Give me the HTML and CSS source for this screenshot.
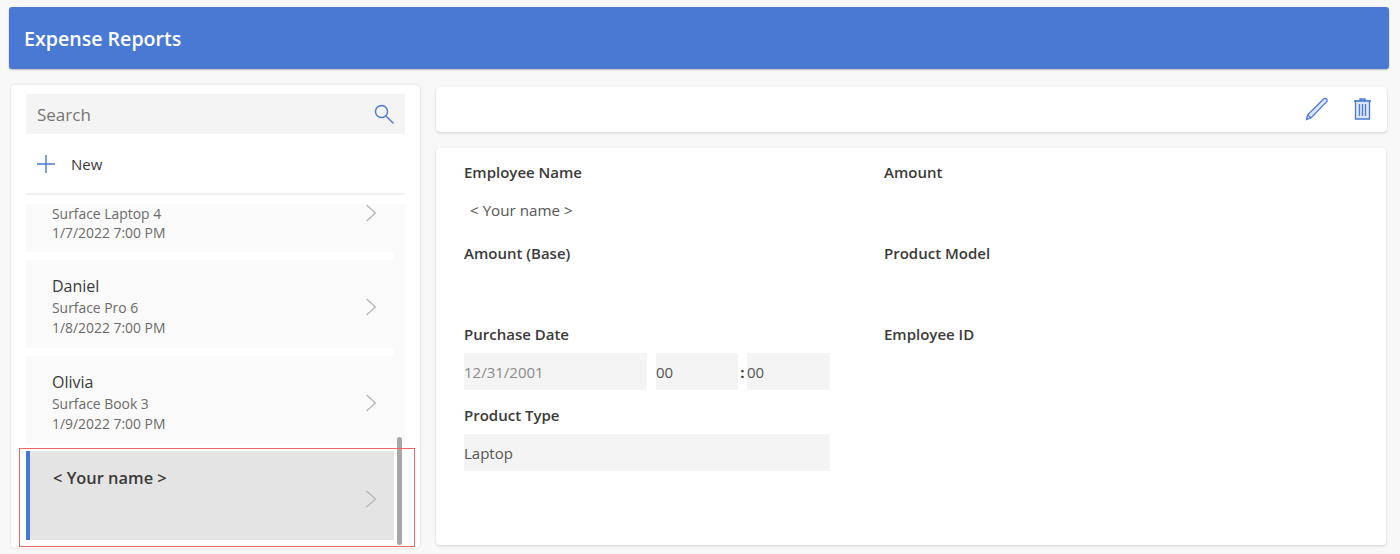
FILE: index.html
```html
<!DOCTYPE html>
<html lang="en">
<head>
    <meta charset="UTF-8">
    <title>Expense Reports</title>
    <link rel="stylesheet" href="styles.css">
</head>
<body>
    <header class="app-header">Expense Reports</header>
    <div class="app-body">
        <aside class="side-panel">
            <div class="search-box">
                <span class="search-text">Search</span>
                <svg class="search-icon" width="22" height="22" viewBox="0 0 22 22"><circle cx="8.5" cy="8.5" r="6"/><path d="M13 13l7.5 7.5"/></svg>
            </div>
            <div class="new-row">
                <svg class="plus-icon" width="20" height="20" viewBox="0 0 20 20"><path d="M10 1v18M1 10h18"/></svg>
                <span>New</span>
            </div>
            <div class="list-scroll">
                <div class="list-item partial">
                    <div class="item-sub">Surface Laptop 4</div>
                    <div class="item-sub">1/7/2022 7:00 PM</div>
                    <svg class="chevron" width="12" height="18" viewBox="0 0 12 18"><path d="M1.5 1l9 8-9 8"/></svg>
                </div>
                <div class="list-item">
                    <div class="item-title">Daniel</div>
                    <div class="item-sub">Surface Pro 6</div>
                    <div class="item-sub">1/8/2022 7:00 PM</div>
                    <svg class="chevron" width="12" height="18" viewBox="0 0 12 18"><path d="M1.5 1l9 8-9 8"/></svg>
                </div>
                <div class="list-item">
                    <div class="item-title">Olivia</div>
                    <div class="item-sub">Surface Book 3</div>
                    <div class="item-sub">1/9/2022 7:00 PM</div>
                    <svg class="chevron" width="12" height="18" viewBox="0 0 12 18"><path d="M1.5 1l9 8-9 8"/></svg>
                </div>
            </div>
            <div class="list-item selected">
                <div class="item-title">&lt; Your name &gt;</div>
                <svg class="chevron" width="12" height="18" viewBox="0 0 12 18"><path d="M1.5 1l9 8-9 8"/></svg>
            </div>
            <div class="scroll-thumb"></div>
            <div class="callout"></div>
        </aside>
        <main class="detail">
            <div class="toolbar">
                <svg class="tool-icon" width="26" height="26" viewBox="0 0 26 26"><path d="M2.5 23.5l1.2-4.6L19.6 3a2 2 0 0 1 2.9 0 2 2 0 0 1 0 2.9L6.9 22z"/><path d="M3.7 18.9l3.2 3.1"/></svg>
                <svg class="tool-icon" width="20" height="24" viewBox="0 0 20 24"><path d="M2 4h17M8 4V2h5v2"/><path d="M3.5 4v18h14V4z"/><path d="M7.5 7v12M10.5 7v12M13.5 7v12"/></svg>
            </div>
            <form class="form-card">
                <div class="field">
                    <div class="field-label">Employee Name</div>
                    <div class="field-value">&lt; Your name &gt;</div>
                </div>
                <div class="field">
                    <div class="field-label">Amount</div>
                </div>
                <div class="field">
                    <div class="field-label">Amount (Base)</div>
                </div>
                <div class="field">
                    <div class="field-label">Product Model</div>
                </div>
                <div class="field">
                    <div class="field-label">Purchase Date</div>
                    <div class="date-row">
                        <div class="input-box date-input">12/31/2001</div>
                        <div class="input-box time-input">00</div>
                        <span class="time-colon">:</span>
                        <div class="input-box time-input">00</div>
                    </div>
                </div>
                <div class="field">
                    <div class="field-label">Employee ID</div>
                </div>
                <div class="field">
                    <div class="field-label">Product Type</div>
                    <div class="input-box type-input">Laptop</div>
                </div>
            </form>
        </main>
    </div>
</body>
</html>
```

FILE: styles.css
```css
/* Page */
body {
    margin: 0;
    height: 554px;
    overflow: hidden;
    padding: 7px 11px 0 9px;
    box-sizing: border-box;
    background-color: #f8f8f8;
    font-family: 'Open Sans', 'Noto Sans', sans-serif;
    color: #3b3a39;
}

/* Header */
.app-header {
    height: 62px;
    padding: 1px 0 0 15px;
    box-sizing: border-box;
    display: flex;
    align-items: center;
    background-color: #4a79d4;
    border-radius: 3px;
    box-shadow: 0 1px 2px rgba(0, 0, 0, 0.25);
    color: #fff;
    font-size: 19.6px;
    font-weight: 600;
}

.app-body {
    display: flex;
    gap: 16px;
    margin-top: 16px;
    margin-left: 2px;
}

/* Left panel */
.side-panel {
    position: relative;
    width: 409px;
    height: 463px;
    padding: 9px 15px 0;
    box-sizing: border-box;
    background: #fff;
    border-radius: 4px;
    box-shadow: 0 0 3px rgba(0, 0, 0, 0.14);
}

.search-box {
    height: 40px;
    padding: 1px 10px 0 11px;
    box-sizing: border-box;
    display: flex;
    align-items: center;
    justify-content: space-between;
    background-color: #f4f4f4;
}

.search-text {
    font-size: 17px;
    color: #757575;
}

.search-icon {
    margin-top: -1px;
    fill: none;
    stroke: #4a79d4;
    stroke-width: 1.4;
}

.new-row {
    height: 59px;
    padding-left: 10px;
    display: flex;
    align-items: center;
    gap: 15px;
    border-bottom: 2px solid #f0f0f0;
    font-size: 15px;
}

.plus-icon {
    fill: none;
    stroke: #4a79d4;
    stroke-width: 1.4;
}

/* List */
.list-scroll {
    height: 240px;
    margin-top: 9px;
    margin-bottom: 7px;
    display: flex;
    flex-direction: column;
    justify-content: flex-end;
    overflow: hidden;
    background-color: #fafafa;
}

.list-item {
    position: relative;
    flex: none;
    width: 368px;
    height: 88px;
    padding: 15px 0 0 26px;
    box-sizing: border-box;
    background-color: #fafafa;
}

.list-item + .list-item {
    margin-top: 8px;
    box-shadow: 0 -8px 0 #fff;
}

/* Row that is scrolled half out of the list */
.list-item.partial {
    height: 48px;
    padding-top: 0;
}

.list-item.partial .item-sub {
    line-height: 19px;
}

.list-item.partial .chevron {
    top: 0;
}

.item-title {
    font-size: 16px;
    line-height: 22px;
    margin-bottom: 1px;
}

.item-sub {
    font-size: 13.9px;
    line-height: 20px;
    color: #6b6a69;
}

.chevron {
    position: absolute;
    right: 17px;
    top: 38px;
    fill: none;
    stroke: #b3b3b3;
    stroke-width: 1.2;
}

.list-item.selected {
    height: 89px;
    background-color: #e4e4e4;
    border-left: 4px solid #4a79d4;
    padding-left: 23px;
    padding-top: 16px;
}

.list-item.selected .chevron {
    top: 39px;
}

.list-item.selected .item-title {
    font-weight: 600;
    font-size: 16.4px;
}

.scroll-thumb {
    position: absolute;
    right: 18px;
    top: 352px;
    width: 5px;
    height: 108px;
    border-radius: 3px;
    background-color: #a6a6a6;
}

/* Red marker round the new record */
.callout {
    position: absolute;
    left: 8px;
    top: 363px;
    width: 394px;
    height: 97px;
    border: 1px solid #f46464;
}

/* Right side */
.detail {
    flex: none;
    width: 951px;
    display: flex;
    flex-direction: column;
    gap: 16px;
}

.toolbar {
    height: 45px;
    margin-top: 2px;
    padding: 0 15px 1px 0;
    box-sizing: border-box;
    display: flex;
    align-items: center;
    justify-content: flex-end;
    gap: 22px;
    background: #fff;
    border-radius: 4px;
    box-shadow: 0 1px 3px rgba(0, 0, 0, 0.16);
}

.tool-icon {
    fill: #dde6f7;
    stroke: #4a79d4;
    stroke-width: 1.3;
}

.form-card {
    width: 950px;
    height: 397px;
    padding: 14px 0 0 28px;
    box-sizing: border-box;
    display: grid;
    grid-template-columns: 420px 1fr;
    grid-auto-rows: 81px;
    background: #fff;
    border-radius: 4px;
    box-shadow: 0 1px 3px rgba(0, 0, 0, 0.16);
}

.field-label {
    font-size: 15px;
    line-height: 20px;
    font-weight: 600;
    margin-bottom: 9px;
}

.field-value {
    padding: 2px 0 0 6px;
    font-size: 15.2px;
    line-height: 35px;
    color: #555;
}

.input-box {
    height: 37px;
    display: flex;
    align-items: center;
    background-color: #f4f4f4;
    font-size: 15px;
    color: #555;
}

.date-row {
    display: flex;
    align-items: center;
}

.date-input {
    width: 183px;
    margin-right: 9px;
    color: #8a8a8a;
}

.time-input {
    width: 82px;
}

.time-input:last-child {
    width: 83px;
}

.time-colon {
    width: 9px;
    text-align: center;
    font-size: 15px;
    font-weight: 700;
}

.type-input {
    width: 366px;
}
```
